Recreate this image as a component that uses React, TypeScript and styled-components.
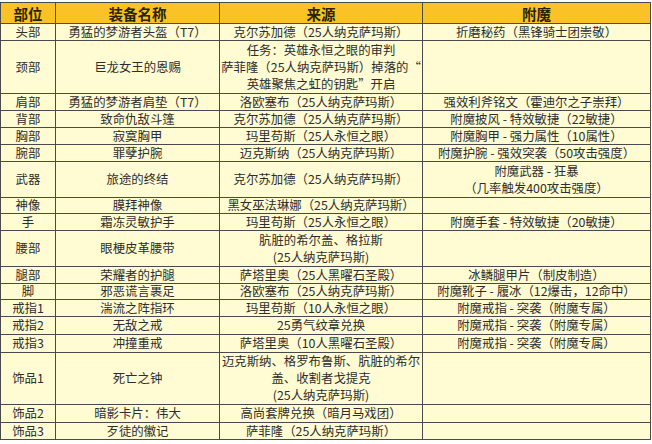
import styled, { createGlobalStyle } from 'styled-components';

const GlobalStyle = createGlobalStyle`
  html, body {
    margin: 0;
    padding: 0;
    background: #fff;
  }
  body {
    font-family: "Noto Sans CJK SC", "Noto Sans", sans-serif;
  }
`;

type GearRow = {
  slot: string;
  name: string;
  source: string[];
  enchant: string[];
  height: number;
};

// height = row pitch in the screenshot, border included
const rows: GearRow[] = [
  { slot: '头部', name: '勇猛的梦游者头盔（T7）', source: ['克尔苏加德（25人纳克萨玛斯）'], enchant: ['折磨秘药（黑锋骑士团崇敬）'], height: 17 },
  {
    slot: '颈部',
    name: '巨龙女王的恩赐',
    source: ['任务：英雄永恒之眼的审判', '萨菲隆（25人纳克萨玛斯）掉落的“', '英雄聚焦之虹的钥匙”开启'],
    enchant: [],
    height: 53,
  },
  { slot: '肩部', name: '勇猛的梦游者肩垫（T7）', source: ['洛欧塞布（25人纳克萨玛斯）'], enchant: ['强效利斧铭文（霍迪尔之子崇拜）'], height: 17 },
  { slot: '背部', name: '致命仇敌斗篷', source: ['克尔苏加德（25人纳克萨玛斯）'], enchant: ['附魔披风 - 特效敏捷（22敏捷）'], height: 17 },
  { slot: '胸部', name: '寂寞胸甲', source: ['玛里苟斯（25人永恒之眼）'], enchant: ['附魔胸甲 - 强力属性（10属性）'], height: 17 },
  { slot: '腕部', name: '罪孽护腕', source: ['迈克斯纳（25人纳克萨玛斯）'], enchant: ['附魔护腕 - 强效突袭（50攻击强度）'], height: 17 },
  {
    slot: '武器',
    name: '旅途的终结',
    source: ['克尔苏加德（25人纳克萨玛斯）'],
    enchant: ['附魔武器 - 狂暴', '（几率触发400攻击强度）'],
    height: 36,
  },
  { slot: '神像', name: '膜拜神像', source: ['黑女巫法琳娜（25人纳克萨玛斯）'], enchant: [], height: 16 },
  { slot: '手', name: '霜冻灵敏护手', source: ['玛里苟斯（25人永恒之眼）'], enchant: ['附魔手套 - 特效敏捷（20敏捷）'], height: 17 },
  {
    slot: '腰部',
    name: '眼梗皮革腰带',
    source: ['肮脏的希尔盖、格拉斯', '(25人纳克萨玛斯)'],
    enchant: [],
    height: 36,
  },
  { slot: '腿部', name: '荣耀者的护腿', source: ['萨塔里奥（25人黑曜石圣殿）'], enchant: ['冰鳞腿甲片（制皮制造）'], height: 17 },
  { slot: '脚', name: '邪恶谎言裹足', source: ['洛欧塞布（25人纳克萨玛斯）'], enchant: ['附魔靴子 - 履冰（12爆击，12命中）'], height: 16 },
  { slot: '戒指1', name: '湍流之阵指环', source: ['玛里苟斯（10人永恒之眼）'], enchant: ['附魔戒指 - 突袭（附魔专属）'], height: 17 },
  { slot: '戒指2', name: '无敌之戒', source: ['25勇气纹章兑换'], enchant: ['附魔戒指 - 突袭（附魔专属）'], height: 18 },
  { slot: '戒指3', name: '冲撞重戒', source: ['萨塔里奥（10人黑曜石圣殿）'], enchant: ['附魔戒指 - 突袭（附魔专属）'], height: 18 },
  {
    slot: '饰品1',
    name: '死亡之钟',
    source: ['迈克斯纳、格罗布鲁斯、肮脏的希尔', '盖、收割者戈提克', '(25人纳克萨玛斯)'],
    enchant: [],
    height: 51,
  },
  { slot: '饰品2', name: '暗影卡片：伟大', source: ['高尚套牌兑换（暗月马戏团）'], enchant: [], height: 18 },
  { slot: '饰品3', name: '歹徒的徽记', source: ['萨菲隆（25人纳克萨玛斯）'], enchant: [], height: 17 },
];

const Page = styled.div`
  padding-top: 2px;
  width: 652px;
`;

const Table = styled.table`
  border-collapse: collapse;
  table-layout: fixed;
  width: 650px;
  background: #fffbd2;
  color: #2e2e2e;
`;

const HeadRow = styled.tr`
  height: 21px;
  background: #fbc227;
`;

const HeadCell = styled.th`
  border: 1px solid #4a4a4a;
  padding: 0;
  font-size: 14.5px;
  font-weight: 700;
  line-height: 19px;
  color: #2a2200;
  text-align: center;
`;

const BodyRow = styled.tr<{ $h: number }>`
  height: ${(p) => p.$h}px;
`;

const Cell = styled.td`
  border: 1px solid #4a4a4a;
  padding: 0;
  font-size: 12.4px;
  line-height: 15px;
  text-align: center;
  vertical-align: middle;
  white-space: nowrap;
  overflow: visible;
`;

const Line = styled.div<{ $lh: number }>`
  line-height: ${(p) => p.$lh}px;
`;

export default function App() {
  return (
    <Page>
      <GlobalStyle />
      <Table>
        <colgroup>
          <col style={{ width: 55 }} />
          <col style={{ width: 164 }} />
          <col style={{ width: 203 }} />
          <col style={{ width: 228 }} />
        </colgroup>
        <thead>
          <HeadRow>
            <HeadCell>部位</HeadCell>
            <HeadCell>装备名称</HeadCell>
            <HeadCell>来源</HeadCell>
            <HeadCell>附魔</HeadCell>
          </HeadRow>
        </thead>
        <tbody>
          {rows.map((r) => (
            <BodyRow key={r.slot} $h={r.height}>
              <Cell>{r.slot}</Cell>
              <Cell>{r.name}</Cell>
              <Cell>
                {r.source.map((l) => (
                  <Line key={l} $lh={r.source.length > 1 ? 17 : 15}>
                    {l}
                  </Line>
                ))}
              </Cell>
              <Cell>
                {r.enchant.map((l) => (
                  <Line key={l} $lh={r.enchant.length > 1 ? 17 : 15}>
                    {l}
                  </Line>
                ))}
              </Cell>
            </BodyRow>
          ))}
        </tbody>
      </Table>
    </Page>
  );
}
